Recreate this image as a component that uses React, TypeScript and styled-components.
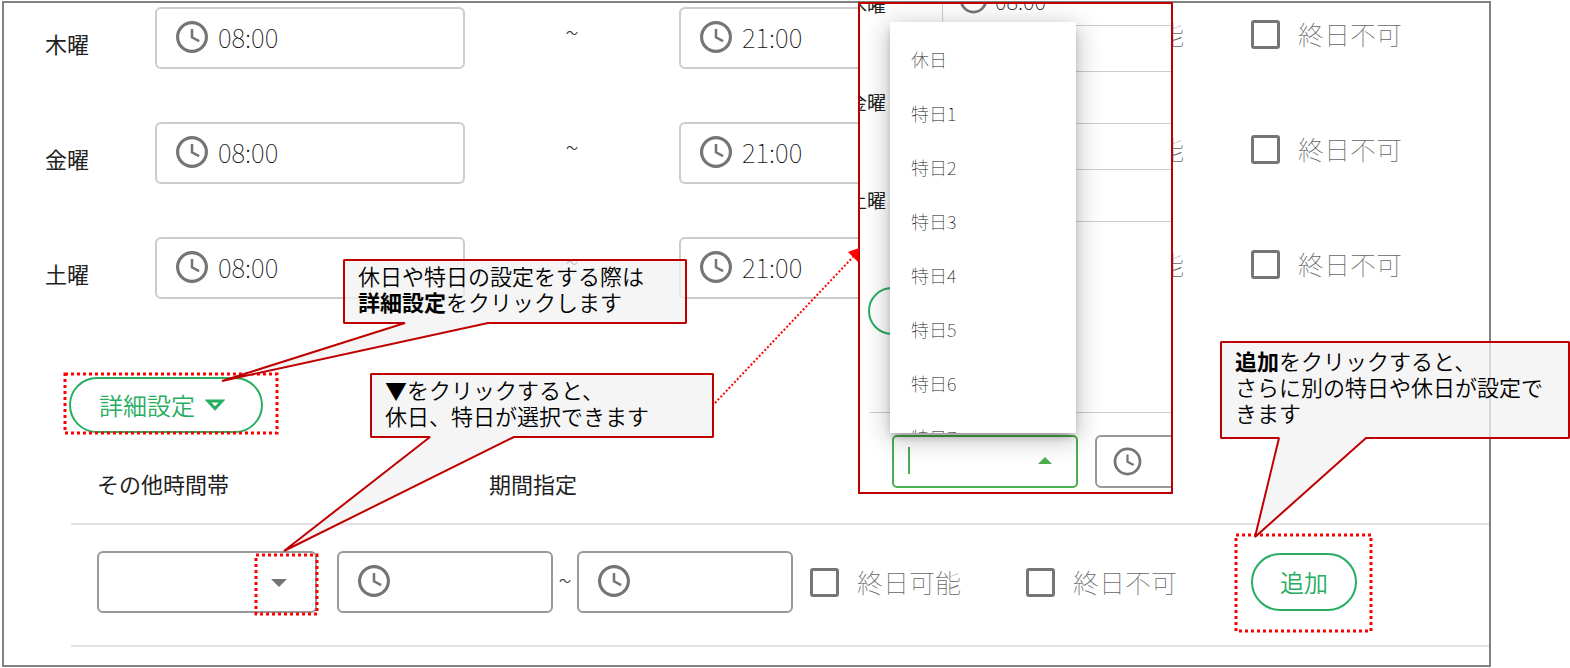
import React, { useId } from 'react';
import styled, { createGlobalStyle } from 'styled-components';

const GREEN = '#27ae60';
const FOCUS_GREEN = '#4caf50';
const GREY = '#757575';
const CALLOUT_RED = '#c00000';

const GlobalStyle = createGlobalStyle`
  *, *::before, *::after { box-sizing: border-box; }
  body {
    margin: 0;
    background: #fff;
    color: #222;
    font-family: "Noto Sans CJK JP", sans-serif;
    overflow-x: hidden;
  }
  button, input, select { font: inherit; color: inherit; }
`;

/* ---------- page frame ---------- */

const Sheet = styled.main`
  position: relative;
  margin: 1px 79px 1px 2px;
  padding: 4px 0 18px;
  border: 2px solid #808480;
`;

const Days = styled.div`
  display: flex;
  flex-direction: column;
`;

const DayRow = styled.div`
  display: grid;
  grid-template-columns: 110px 310px 214px 310px 44px 218px minmax(0, 1fr);
  height: 115px;
  padding-left: 41px;
  align-items: start;
`;

const DayName = styled.span`
  font-size: 22px;
  line-height: 32px;
  padding-top: 20px;
`;

const Tilde = styled.span`
  text-align: center;
  font-size: 12px;
  line-height: 52px;
  color: #333;
`;

/* ---------- form parts ---------- */

const TimeBox = styled.label<{ $strong?: boolean; $small?: boolean }>`
  display: flex;
  align-items: center;
  gap: ${(p) => (p.$small ? 5 : 7)}px;
  height: ${(p) => (p.$small ? 53 : 62)}px;
  padding: 0 12px ${(p) => (p.$small ? 0 : 2)}px ${(p) => (p.$small ? 14 : 16)}px;
  border: ${(p) => (p.$small && !p.$strong ? 1 : 2)}px solid ${(p) => (p.$strong ? '#999' : '#ccc')};
  border-radius: 6px;
  font-size: ${(p) => (p.$small ? 22 : 26)}px;
  svg { flex: none; }
`;

const TimeInput = styled.input`
  flex: 1;
  min-width: 0;
  width: 100%;
  padding: 0;
  border: 0;
  outline: 0;
  background: transparent;
  font-weight: 100;
  line-height: 32px;
  color: #111;
`;

const CheckLabel = styled.label`
  display: flex;
  align-items: center;
  gap: 18px;
  height: 54px;
  font-size: 26px;
  font-weight: 100;
  line-height: 32px;
  color: #666;
  white-space: nowrap;
`;

const CheckBox = styled.input`
  appearance: none;
  flex: none;
  width: 29px;
  height: 29px;
  margin: 0;
  border: 3px solid ${GREY};
  border-radius: 3px;
`;

const PillButton = styled.button<{ $expander?: boolean }>`
  display: inline-flex;
  align-items: center;
  gap: 10px;
  height: ${(p) => (p.$expander ? 56 : 58)}px;
  padding: ${(p) => (p.$expander ? '0 36px 0 28px' : '0 27px')};
  border: 2px solid ${GREEN};
  border-radius: 29px;
  background: transparent;
  color: ${GREEN};
  font-size: 24px;
  font-weight: 350;
  line-height: 32px;
  white-space: nowrap;
`;

/* ---------- detail settings ---------- */

const DetailBar = styled.div`
  display: flex;
  padding: 25px 0 0 65px;
`;

const Anchor = styled.div`
  position: relative;
  display: flex;
`;

const Extra = styled.section`
  margin-left: 67px;
`;

const ExtraHead = styled.div`
  display: grid;
  grid-template-columns: 392px 1fr;
  padding: 34px 0 24px 26px;
  border-bottom: 2px solid #e3e3e3;
  font-size: 22px;
  line-height: 32px;
`;

const ExtraRow = styled.div`
  display: grid;
  grid-template-columns: 220px 20px 216px 24px 216px 17px 216px 225px auto 1fr;
  padding: 26px 0 32px 26px;
  border-bottom: 2px solid #e3e3e3;
  align-items: start;
`;

const SelectWrap = styled.div`
  position: relative;
  display: grid;
`;

const Select = styled.select`
  appearance: none;
  height: 62px;
  width: 100%;
  padding: 0 56px 0 16px;
  border: 2px solid #999;
  border-radius: 6px;
  background: transparent;
  font-size: 22px;
`;

const SelectArrow = styled.svg`
  position: absolute;
  right: 30px;
  top: 28px;
  pointer-events: none;
`;

const AddSlot = styled.div`
  position: relative;
  display: flex;
  margin-top: 2px;
`;

const RowItem = styled.div`
  display: grid;
  padding-top: 4px;
`;

/* ---------- annotations ---------- */

const HighlightFrame = styled.svg<{ $t: number; $r: number; $b: number; $l: number }>`
  position: absolute;
  top: ${(p) => -p.$t}px;
  left: ${(p) => -p.$l}px;
  width: calc(100% + ${(p) => p.$l + p.$r}px);
  height: calc(100% + ${(p) => p.$t + p.$b}px);
  overflow: visible;
  pointer-events: none;
`;

const CalloutBox = styled.aside<{ $x: number; $y: number; $w: number; $h: number; $pad: number }>`
  position: absolute;
  z-index: 3;
  left: ${(p) => p.$x}px;
  top: ${(p) => p.$y}px;
  width: ${(p) => p.$w}px;
  height: ${(p) => p.$h}px;
  padding: ${(p) => p.$pad}px 14px 0 15px;
  color: #000;
  font-size: 22px;
  font-weight: 350;
  line-height: 26px;
  p { position: relative; margin: 0; }
  b { font-weight: 700; }
`;

const CalloutShape = styled.svg`
  position: absolute;
  inset: 0;
  overflow: visible;
`;

const Pointer = styled.svg`
  position: absolute;
  z-index: 5;
  left: 710px;
  top: 241px;
  overflow: visible;
  pointer-events: none;
`;

/* ---------- inset with the open drop-down ---------- */

const Inset = styled.section`
  position: absolute;
  z-index: 4;
  left: 854px;
  top: -1px;
  width: 315px;
  height: 492px;
  border: 2px solid ${CALLOUT_RED};
  background: #fff;
  overflow: hidden;
`;

const InsetScreen = styled.div`
  width: 400px;
  margin-top: -31px;
`;

const InsetDay = styled.div`
  display: grid;
  grid-template-columns: 94px 262px;
  margin-left: -12px;
  height: 98px;
  align-items: start;
`;

const InsetDayName = styled.span`
  font-size: 19px;
  line-height: 26px;
  padding-top: 18px;
`;

const InsetPill = styled.div`
  width: 163px;
  height: 48px;
  margin: 20px 0 77px 8px;
  border: 2px solid ${GREEN};
  border-radius: 24px;
`;

const InsetFields = styled.div`
  display: grid;
  grid-template-columns: 186px 182px;
  gap: 17px;
  margin-left: 10px;
  padding: 22px 0 0 22px;
  border-top: 1px solid #ccc;
`;

const OpenField = styled.div`
  display: flex;
  align-items: center;
  justify-content: space-between;
  height: 53px;
  padding: 0 24px 2px 14px;
  border: 2px solid ${FOCUS_GREEN};
  border-radius: 5px;
`;

const Caret = styled.span`
  width: 2px;
  height: 27px;
  background: ${FOCUS_GREEN};
`;

const MenuPanel = styled.div`
  position: absolute;
  left: 30px;
  top: 18px;
  width: 186px;
  height: 411px;
  background: #fff;
  box-shadow: 0 5px 8px -3px rgba(0, 0, 0, 0.35), 0 5px 24px 2px rgba(0, 0, 0, 0.24);
`;

const Menu = styled.ul`
  height: 100%;
  margin: 0;
  padding: 10px 0 0;
  list-style: none;
  overflow: hidden;
`;

const MenuItem = styled.li`
  padding-left: 21px;
  font-size: 18px;
  font-weight: 100;
  line-height: 54px;
  color: #111;
`;

/* ---------- pieces ---------- */

const Clock = ({ size = 38 }: { size?: number }) => (
  <svg width={size} height={size} viewBox="0 0 24 24" fill="none" stroke={GREY} aria-hidden="true">
    <circle cx="12" cy="12" r="9.1" strokeWidth="2" />
    <path d="M12 6.9V12.2L16.5 14.6" strokeWidth="1.6" />
  </svg>
);

type TimeProps = { name: string; value?: string; strong?: boolean; small?: boolean };
const TimeField = ({ name, value = '', strong, small }: TimeProps) => (
  <TimeBox $strong={strong} $small={small}>
    <Clock size={small ? 33 : 38} />
    <TimeInput type="text" aria-label={name} defaultValue={value} />
  </TimeBox>
);

const Check = ({ text }: { text: string }) => {
  const id = useId();
  return (
    <CheckLabel htmlFor={id}>
      <CheckBox type="checkbox" id={id} />
      {text}
    </CheckLabel>
  );
};

const Highlight = ({ t, r, b, l }: { t: number; r: number; b: number; l: number }) => (
  <HighlightFrame $t={t} $r={r} $b={b} $l={l} aria-hidden="true">
    <rect width="100%" height="100%" fill="none" stroke="#f00" strokeWidth="3" strokeDasharray="3 3" />
  </HighlightFrame>
);

type CalloutProps = {
  x: number;
  y: number;
  w: number;
  h: number;
  pad?: number;
  base: [number, number];
  tip: [number, number];
  children: React.ReactNode;
};
const Callout = ({ x, y, w, h, pad = 3, base, tip, children }: CalloutProps) => (
  <CalloutBox $x={x} $y={y} $w={w} $h={h} $pad={pad}>
    <CalloutShape width={w} height={h} aria-hidden="true">
      <path
        d={`M1 1H${w - 1}V${h - 1}H${base[1]}L${tip[0]} ${tip[1]}L${base[0]} ${h - 1}H1Z`}
        fill="#f2f2f2"
        fillOpacity="0.75"
        stroke={CALLOUT_RED}
        strokeWidth="2"
        strokeLinejoin="bevel"
      />
    </CalloutShape>
    <p>{children}</p>
  </CalloutBox>
);

const DAYS = ['木曜', '金曜', '土曜'];
const OPTIONS = ['休日', '特日1', '特日2', '特日3', '特日4', '特日5', '特日6', '特日7'];

export default function App() {
  return (
    <>
      <GlobalStyle />
      <Sheet>
        <Days>
          {DAYS.map((day) => (
            <DayRow key={day}>
              <DayName>{day}</DayName>
              <TimeField name={`${day} 開始`} value="08:00" />
              <Tilde>～</Tilde>
              <TimeField name={`${day} 終了`} value="21:00" />
              <span />
              <Check text="終日可能" />
              <Check text="終日不可" />
            </DayRow>
          ))}
        </Days>

        <DetailBar>
          <Anchor>
            <PillButton type="button" $expander>
              詳細設定
              <svg width="20" height="12" viewBox="0 0 20 12" aria-hidden="true">
                <path d="M3 2H17L10 9.5Z" fill="none" stroke={GREEN} strokeWidth="3" />
              </svg>
            </PillButton>
            <Highlight t={3} r={14} b={0} l={4} />
            <Callout x={274} y={-118} w={344} h={65} base={[62, 145]} tip={[-121, 122]}>
              休日や特日の設定をする際は
              <br />
              <b>詳細設定</b>をクリックします
            </Callout>
          </Anchor>
        </DetailBar>

        <Extra>
          <ExtraHead>
            <span>その他時間帯</span>
            <span>期間指定</span>
          </ExtraHead>
          <ExtraRow>
            <SelectWrap>
              <Select aria-label="その他時間帯" defaultValue="">
                <option value=""></option>
                {OPTIONS.map((o) => (
                  <option key={o} value={o}>{o}</option>
                ))}
              </Select>
              <SelectArrow width="16" height="8" viewBox="0 0 16 8" aria-hidden="true">
                <path d="M0 0H16L8 8Z" fill={GREY} />
              </SelectArrow>
              <Highlight t={-4} r={0} b={1} l={-159} />
              <Callout x={273} y={-178} w={344} h={65} base={[60, 144]} tip={[-86, 178]}>
                ▼をクリックすると、
                <br />
                休日、特日が選択できます
              </Callout>
            </SelectWrap>
            <span />
            <TimeField name="期間指定 開始" strong />
            <RowItem><Tilde>～</Tilde></RowItem>
            <TimeField name="期間指定 終了" strong />
            <span />
            <RowItem><Check text="終日可能" /></RowItem>
            <RowItem><Check text="終日不可" /></RowItem>
            <AddSlot>
              <PillButton type="button">追加</PillButton>
              <Highlight t={18} r={14} b={20} l={15} />
              <Callout x={-31} y={-212} w={350} h={98} pad={6} base={[59, 146]} tip={[35, 196]}>
                <b>追加</b>をクリックすると、
                <br />
                さらに別の特日や休日が設定できます
              </Callout>
            </AddSlot>
          </ExtraRow>
        </Extra>

        <Inset aria-label="選択リスト">
          <InsetScreen>
            {DAYS.map((day) => (
              <InsetDay key={day}>
                <InsetDayName>{day}</InsetDayName>
                <TimeField name={`${day} 拡大`} value="08:00" small />
              </InsetDay>
            ))}
            <InsetPill />
            <InsetFields>
              <OpenField>
                <Caret />
                <svg width="14" height="7" viewBox="0 0 14 7" aria-hidden="true">
                  <path d="M0 7H14L7 0Z" fill={FOCUS_GREEN} />
                </svg>
              </OpenField>
              <TimeField name="期間" strong small />
            </InsetFields>
          </InsetScreen>
          <MenuPanel>
            <Menu role="listbox" aria-label="特日">
              {OPTIONS.map((o) => (
                <MenuItem key={o} role="option">{o}</MenuItem>
              ))}
            </Menu>
          </MenuPanel>
        </Inset>

        <Pointer width="146" height="160" aria-hidden="true">
          <path d="M1 159L139 13" stroke="#f00" strokeWidth="2" strokeDasharray="2 2" fill="none" />
          <path d="M145 4L134 8L144 18Z" fill="#f00" />
        </Pointer>
      </Sheet>
    </>
  );
}
